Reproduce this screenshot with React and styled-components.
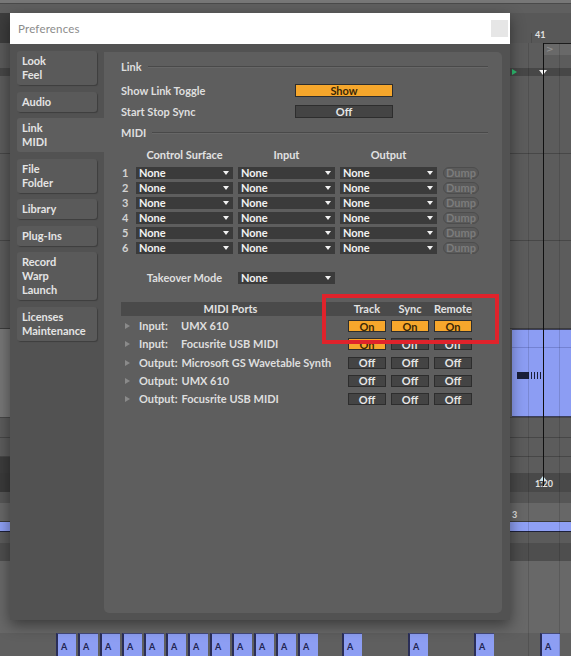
import styled, { createGlobalStyle } from 'styled-components';

const GlobalStyle = createGlobalStyle`
  html, body {
    margin: 0;
    padding: 0;
    background: #fff;
  }
  body {
    font-family: Lato, "Open Sans", sans-serif;
  }
`;

const Screen = styled.div`
  position: relative;
  width: 587px;
  height: 656px;
  overflow: hidden;
  background: #fff;
`;

/* ---------- arrangement view behind the dialog ---------- */

const Arrangement = styled.div`
  position: relative;
  width: 571px;
  height: 656px;
  display: flex;
  flex-direction: column;
  background: #5c5c5c;
`;

const Lane = styled.div`
  position: relative;
  flex: 0 0 ${({ $h }) => $h}px;
  display: flex;
  box-sizing: border-box;
  background: ${({ $bg }) => $bg || '#5c5c5c'};
  border-bottom: ${({ $line }) => ($line ? `1px solid ${$line}` : 'none')};
`;

const LaneCap = styled.div`
  flex: 0 0 10px;
  background: ${({ $bg }) => $bg};
`;

const GridLine = styled.div`
  position: absolute;
  top: 43px;
  bottom: 0;
  width: 1px;
  background: ${({ $dark }) => ($dark ? '#101010' : 'rgba(0, 0, 0, 0.13)')};
`;

const BarNumber = styled.span`
  position: absolute;
  font: 700 9px Lato, sans-serif;
  color: #e2e2e2;
  line-height: 10px;
`;

const LoopBrace = styled.div`
  position: absolute;
  left: 543px;
  right: 0;
  top: 0;
  height: 11px;
  background: #696969;
  border-top: 1px solid #1c1c1c;
  color: #8e8e8e;
  font: 700 9px "DejaVu Sans", sans-serif;
  line-height: 10px;
  padding-left: 3px;
`;

const Triangle = styled.div`
  position: absolute;
  width: 0;
  height: 0;
`;

const BlueClip = styled.div`
  position: absolute;
  left: 512px;
  right: 0;
  top: 0;
  bottom: 0;
  background: #8c9df3;
  border-top: 1px solid #3b3f5e;
  border-bottom: 1px solid #3b3f5e;
  display: flex;
  align-items: center;
  padding-left: 5px;
  gap: 2px;
`;

const ClipHeader = styled.div`
  position: absolute;
  left: 0;
  right: 0;
  top: 17px;
  height: 1px;
  background: rgba(40, 50, 110, 0.25);
`;

const MidiBlock = styled.span`
  width: ${({ $w }) => $w}px;
  height: 7px;
  background: #1a1f3a;
  margin-top: 5px;
`;

const BlueBar = styled.div`
  flex: 1;
  background: #8fa0f5;
  border-top: 1px solid #3a3a3a;
  border-bottom: 1px solid #1d2038;
`;

const ClipSlot = styled.div`
  position: absolute;
  top: 0;
  bottom: 0;
  width: 20px;
  box-sizing: border-box;
  background: #8d9ef3;
  border-left: 2px solid #2a2e58;
  border-top: 1px solid #444a7a;
  font: 700 9px Lato, sans-serif;
  color: #1f2452;
  padding: 7px 0 0 3px;
`;

/* ---------- preferences dialog ---------- */

const Dialog = styled.div`
  position: absolute;
  left: 10px;
  top: 13px;
  width: 500px;
  height: 607px;
  display: flex;
  flex-direction: column;
  box-shadow: 0 5px 14px rgba(0, 0, 0, 0.45);
`;

const TitleBar = styled.div`
  flex: 0 0 31px;
  display: flex;
  align-items: center;
  padding: 0 2px 0 8px;
  background: #fff;
`;

const Title = styled.span`
  font: 400 11.5px Lato, sans-serif;
  color: #8c8c8c;
  letter-spacing: 0.2px;
`;

const CloseButton = styled.div`
  margin-left: auto;
  width: 17px;
  height: 17px;
  background: #e6e6e6;
`;

const DialogBody = styled.div`
  flex: 1;
  display: flex;
  background: #525252;
  padding: 7px 8px 7px 7px;
`;

const Sidebar = styled.nav`
  flex: 0 0 87px;
  display: flex;
  flex-direction: column;
  gap: 6.5px;
`;

const Tab = styled.div`
  width: ${({ $active }) => ($active ? 87 : 80)}px;
  box-sizing: border-box;
  padding: 3px 5px;
  border-radius: ${({ $active }) => ($active ? '3px 0 0 3px' : '3px')};
  background: ${({ $active }) => ($active ? '#5e5e5e' : '#5a5a5a')};
  box-shadow: ${({ $active }) => ($active ? 'none' : '1px 1px 1px rgba(0, 0, 0, 0.25)')};
  font: 700 11px Lato, sans-serif;
  line-height: 14px;
  color: #e4e4e4;
`;

const Panel = styled.section`
  position: relative;
  flex: 1;
  display: flex;
  flex-direction: column;
  margin-top: 1px;
  background: #5e5e5e;
  border-radius: 0 5px 5px 5px;
  padding: 8px 14px 0 17px;
  font: 700 11px Lato, sans-serif;
  line-height: 12px;
  color: #dedede;
`;

const SectionHeader = styled.div`
  flex: none;
  height: 14px;
  display: flex;
  align-items: center;
  gap: 6px;
  margin-top: ${({ $gap }) => $gap || 0}px;
  margin-bottom: 6px;
`;

const Rule = styled.span`
  flex: 1;
  border-top: 1px solid #494949;
  border-bottom: 1px solid #676767;
`;

const SettingRow = styled.div`
  flex: none;
  height: 21px;
  display: grid;
  grid-template-columns: 174px 98px;
  align-items: center;
`;

const Toggle = styled.div`
  height: ${({ $h }) => $h || 13}px;
  box-sizing: border-box;
  border: 1px solid #2d2d2d;
  background: ${({ $on }) => ($on ? '#f6a72c' : '#444444')};
  color: ${({ $on }) => ($on ? '#3b2806' : '#e6e6e6')};
  display: flex;
  align-items: center;
  justify-content: center;
  font: 700 11px Lato, sans-serif;
`;

const SurfaceGrid = styled.div`
  flex: none;
  height: ${({ $h }) => $h}px;
  display: grid;
  grid-template-columns: 10px 97px 97px 97px 37px;
  grid-template-rows: ${({ $h }) => $h}px;
  column-gap: 5px;
  align-items: center;
  margin-top: ${({ $gap }) => $gap || 0}px;
`;

const ColumnHead = styled.span`
  text-align: center;
  color: #e2e2e2;
`;

const RowNumber = styled.span`
  padding-left: 1px;
  color: #d2d2d2;
`;

const Select = styled.div`
  height: 12px;
  display: flex;
  align-items: center;
  justify-content: space-between;
  padding: 0 4px 0 3px;
  background: #3b3b3b;
  color: #f2f2f2;
`;

const DumpButton = styled.div`
  height: 12px;
  box-sizing: border-box;
  margin-left: 1px;
  border: 1px solid #4d4d4d;
  border-radius: 6px;
  background: #5a5a5a;
  color: #7c7c7c;
  display: flex;
  align-items: center;
  justify-content: center;
`;

const TakeoverLabel = styled.span`
  grid-column: 2;
  text-align: center;
`;

const PortGrid = styled.div`
  flex: none;
  height: ${({ $h }) => $h}px;
  display: grid;
  grid-template-columns: 222px 38px 38px 38px;
  grid-template-rows: ${({ $h }) => $h}px;
  column-gap: 5px;
  align-items: center;
  width: 351px;
  margin-top: ${({ $gap }) => $gap || 0}px;
  background: ${({ $bg }) => $bg || 'transparent'};
`;

const PortsTitle = styled.span`
  text-align: center;
  padding-right: 3px;
  color: #e2e2e2;
`;

const PortName = styled.div`
  display: flex;
  align-items: center;
  padding-left: 4px;
  white-space: nowrap;
`;

const Disclosure = styled.span`
  width: 0;
  height: 0;
  border-left: 5px solid #8a8a8a;
  border-top: 3px solid transparent;
  border-bottom: 3px solid transparent;
  margin-right: 9px;
`;

const PortKind = styled.span`
  min-width: 38px;
  margin-right: 4px;
`;

const Highlight = styled.div`
  position: absolute;
  left: 218px;
  top: 242px;
  width: 177px;
  height: 50px;
  box-sizing: border-box;
  border: 4px solid #e0232b;
`;

const Arrow = () => (
  <svg width="6" height="4" viewBox="0 0 6 4">
    <path d="M0 0H6L3 4Z" fill="#f2f2f2" />
  </svg>
);

const tabs = [
  ['Look', 'Feel'],
  ['Audio'],
  ['Link', 'MIDI'],
  ['File', 'Folder'],
  ['Library'],
  ['Plug-Ins'],
  ['Record', 'Warp', 'Launch'],
  ['Licenses', 'Maintenance'],
];

const ports = [
  { kind: 'Input:', name: 'UMX 610', track: true, sync: true, remote: true },
  { kind: 'Input:', name: 'Focusrite USB MIDI', track: true },
  { kind: 'Output:', name: 'Microsoft GS Wavetable Synth' },
  { kind: 'Output:', name: 'UMX 610' },
  { kind: 'Output:', name: 'Focusrite USB MIDI' },
];

const clipStarts = [56, 78, 100, 122, 144, 166, 188, 210, 232, 254, 276, 298, 342, 408, 474, 540];

function ArrangementView() {
  return (
    <Arrangement>
      <Lane $h={13} $bg="linear-gradient(#777 0 3px, #4a4a4a 3px 4px, #5f5f5f 4px)" />
      <Lane $h={30} $bg="#585858">
        <LaneCap $bg="#3d3d3d" />
        <BarNumber style={{ left: 535, top: 17 }}>41</BarNumber>
        <GridLine style={{ left: 531, top: 20, height: 10 }} />
      </Lane>
      <Lane $h={25}>
        <LaneCap $bg="#5a5a5a" />
        <LoopBrace>&gt;</LoopBrace>
      </Lane>
      <Lane $h={8} $bg="#474747">
        <Triangle style={{ left: 512, top: 1, borderLeft: '5px solid #2fc273', borderTop: '3px solid transparent', borderBottom: '3px solid transparent' }} />
        <Triangle style={{ left: 539, top: 2, borderTop: '5px solid #f4f4f4', borderLeft: '4px solid transparent', borderRight: '4px solid transparent' }} />
      </Lane>
      <Lane $h={78} $line="#474747" />
      <Lane $h={87} $line="#474747" />
      <Lane $h={88} $line="#3c3c3c" />
      <Lane $h={89} $line="#474747">
        <LaneCap $bg="#777" />
        <BlueClip>
          <ClipHeader />
          <MidiBlock $w={12} />
          <MidiBlock $w={1} />
          <MidiBlock $w={1} />
          <MidiBlock $w={1} />
          <MidiBlock $w={1} />
        </BlueClip>
      </Lane>
      <Lane $h={20} $line="#474747" />
      <Lane $h={19} $line="#474747" />
      <Lane $h={16}>
        <LaneCap $bg="#3c3c3c" />
      </Lane>
      <Lane $h={19} $bg="#494949">
        <LaneCap $bg="#3a3a3a" />
        <Triangle style={{ left: 539, top: 3, borderBottom: '5px solid #cfe8f0', borderLeft: '4px solid transparent', borderRight: '4px solid transparent' }} />
        <BarNumber style={{ left: 535, top: 6 }}>1:20</BarNumber>
      </Lane>
      <Lane $h={11} $bg="#565656" />
      <Lane $h={18} $bg="#676767">
        <BarNumber style={{ left: 512, top: 7 }}>3</BarNumber>
      </Lane>
      <Lane $h={11}>
        <BlueBar />
      </Lane>
      <Lane $h={11} $bg="#5b5b5b" />
      <Lane $h={18} $bg="#4e4e4e" />
      <Lane $h={72} $bg="#686868" />
      <Lane $h={23} $bg="#5f5f5f">
        {clipStarts.map((x) => (
          <ClipSlot key={x} style={{ left: x }}>A</ClipSlot>
        ))}
      </Lane>
      <GridLine style={{ left: 528 }} />
      <GridLine style={{ left: 559 }} />
      <GridLine $dark style={{ left: 543, height: 443 }} />
    </Arrangement>
  );
}

function PreferencesDialog() {
  return (
    <Dialog>
      <TitleBar>
        <Title>Preferences</Title>
        <CloseButton />
      </TitleBar>
      <DialogBody>
        <Sidebar>
          {tabs.map((lines) => (
            <Tab key={lines[0]} $active={lines[0] === 'Link'}>
              {lines.map((l) => (
                <div key={l}>{l}</div>
              ))}
            </Tab>
          ))}
        </Sidebar>
        <Panel>
          <SectionHeader>
            Link
            <Rule />
          </SectionHeader>
          <SettingRow>
            <span>Show Link Toggle</span>
            <Toggle $on>Show</Toggle>
          </SettingRow>
          <SettingRow>
            <span>Start Stop Sync</span>
            <Toggle>Off</Toggle>
          </SettingRow>

          <SectionHeader $gap={4}>
            MIDI
            <Rule />
          </SectionHeader>
          <SurfaceGrid $h={14} $gap={2}>
            <span />
            <ColumnHead>Control Surface</ColumnHead>
            <ColumnHead>Input</ColumnHead>
            <ColumnHead>Output</ColumnHead>
          </SurfaceGrid>
          {[1, 2, 3, 4, 5, 6].map((n) => (
            <SurfaceGrid key={n} $h={12} $gap={n === 1 ? 5 : 3}>
              <RowNumber>{n}</RowNumber>
              <Select>None<Arrow /></Select>
              <Select>None<Arrow /></Select>
              <Select>None<Arrow /></Select>
              <DumpButton>Dump</DumpButton>
            </SurfaceGrid>
          ))}
          <SurfaceGrid $h={12} $gap={18}>
            <TakeoverLabel>Takeover Mode</TakeoverLabel>
            <Select>None<Arrow /></Select>
          </SurfaceGrid>

          <PortGrid $h={14} $gap={18} $bg="#4a4a4a">
            <PortsTitle>MIDI Ports</PortsTitle>
            <ColumnHead>Track</ColumnHead>
            <ColumnHead>Sync</ColumnHead>
            <ColumnHead>Remote</ColumnHead>
          </PortGrid>
          {ports.map((p, i) => (
            <PortGrid key={i} $h={18.25} $gap={i === 0 ? 1 : 0}>
              <PortName>
                <Disclosure />
                <PortKind>{p.kind}</PortKind>
                {p.name}
              </PortName>
              <Toggle $h={12} $on={p.track}>{p.track ? 'On' : 'Off'}</Toggle>
              <Toggle $h={12} $on={p.sync}>{p.sync ? 'On' : 'Off'}</Toggle>
              <Toggle $h={12} $on={p.remote}>{p.remote ? 'On' : 'Off'}</Toggle>
            </PortGrid>
          ))}
          <Highlight />
        </Panel>
      </DialogBody>
    </Dialog>
  );
}

export default function App() {
  return (
    <>
      <GlobalStyle />
      <Screen>
        <ArrangementView />
        <PreferencesDialog />
      </Screen>
    </>
  );
}
